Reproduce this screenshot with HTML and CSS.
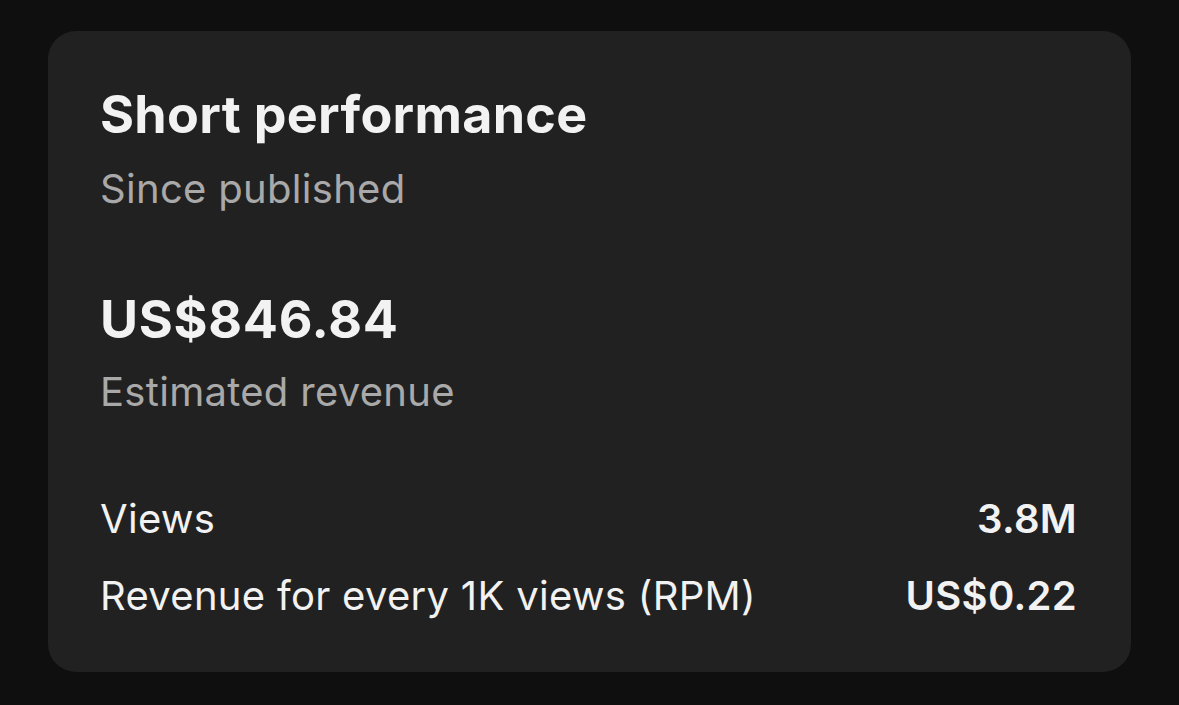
FILE: index.html
```html
<!DOCTYPE html>
<html lang="en">
<head>
    <meta charset="UTF-8">
    <title>Short performance</title>
    <link rel="stylesheet" href="styles.css">
</head>
<body>
    <div class="card">
        <h2 class="card-title">Short performance</h2>
        <p class="card-sub">Since published</p>
        <div class="revenue-amount">US$846.84</div>
        <p class="card-sub amount-label">Estimated revenue</p>
        <div class="stats">
            <div class="stat-row">
                <span class="stat-label">Views</span>
                <span class="stat-value">3.8M</span>
            </div>
            <div class="stat-row">
                <span class="stat-label">Revenue for every 1K views (RPM)</span>
                <span class="stat-value">US$0.22</span>
            </div>
        </div>
    </div>
</body>
</html>
```

FILE: styles.css
```css
body {
    font-family: Inter, "Noto Sans", sans-serif;
    background-color: #0f0f0f;
    margin: 0;
    padding: 31px 48px;
}
.card {
    background-color: #212121;
    border-radius: 28px;
    padding: 54px 54px 0 52px;
    height: 641px;
    box-sizing: border-box;
}
.card-title {
    margin: 0;
    font-size: 52px;
    line-height: 60px;
    font-weight: 700;
    letter-spacing: 0.3px;
    color: #f2f2f2;
}
.card-sub {
    margin: 20px 0 0;
    font-size: 40px;
    line-height: 48px;
    letter-spacing: 0.3px;
    color: #a9a9a9;
}
.revenue-amount {
    margin-top: 77px;
    font-size: 52px;
    line-height: 60px;
    font-weight: 700;
    letter-spacing: 0.7px;
    color: #f2f2f2;
}
.amount-label {
    margin-top: 18px;
}
.stats {
    margin-top: 64px;
}
.stat-row {
    display: flex;
    justify-content: space-between;
    font-size: 40px;
    line-height: 77px;
    letter-spacing: 0.3px;
    color: #f2f2f2;
}
.stat-value {
    font-weight: 600;
}
```
